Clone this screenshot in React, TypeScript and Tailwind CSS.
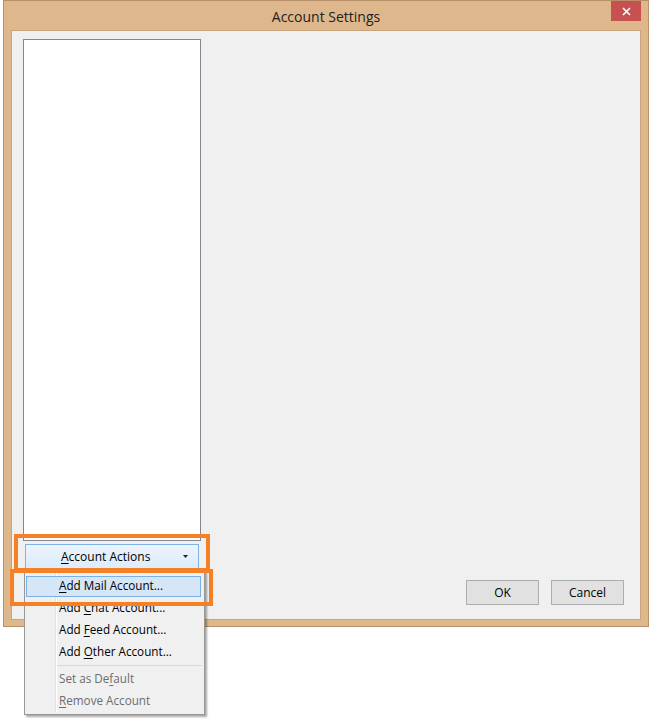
import React from "react";

const font = { fontFamily: '"Open Sans", "Noto Sans", sans-serif' };

function MenuItem({ label, u, rest, disabled }: { label: string; u: string; rest: string; disabled?: boolean }) {
  return (
    <div className={`h-[22px] flex items-center pl-[34px] text-[11.7px] ${disabled ? "text-[#6d6d6d]" : "text-black"}`}>
      <span className="whitespace-pre">
        {label}
        <span className="underline underline-offset-2">{u}</span>
        {rest}
      </span>
    </div>
  );
}

export default function App() {
  return (
    <div className="relative w-[655px] h-[724px] bg-white overflow-hidden" style={font}>
      {/* Window */}
      <div className="ml-[3px] w-[646px] h-[627px] bg-[#dfb78c] border border-[#b8916a] flex flex-col">
        {/* Title bar */}
        <div className="relative h-[29px] flex items-center justify-center">
          <span className="text-[14px] text-[#1e1e1e] mt-[2px]">Account Settings</span>
          <div className="absolute right-[7px] top-0 w-[30px] h-[20px] bg-[#c75050] flex items-center justify-center">
            <svg width="9" height="9" viewBox="0 0 9 9">
              <path d="M1 1 L8 8 M8 1 L1 8" stroke="white" strokeWidth="1.6" />
            </svg>
          </div>
        </div>
        {/* Client area */}
        <div className="mx-[7px] h-[590px] bg-[#f0f0f0] border border-[#c9a37a] flex">
          <div className="pl-[11px] pt-[8px] flex flex-col">
            <div className="w-[178px] h-[502px] bg-white border border-[#828790]" />
            <div className="mt-[3px] ml-[2px] w-[174px] h-[25px] border border-[#7eb4ea] bg-gradient-to-b from-[#ecf4fc] to-[#dcecfc] flex items-center text-[12px] text-black">
              <span className="ml-[35px]">
                <span className="underline underline-offset-2">A</span>ccount Actions
              </span>
              <svg className="ml-auto mr-[10px]" width="5" height="3" viewBox="0 0 5 3">
                <path d="M0 0 H5 L2.5 3 Z" fill="#222" />
              </svg>
            </div>
          </div>
          <div className="flex-1 flex items-end justify-end gap-[12px] pr-[16px] pb-[14px]">
            <div className="w-[73px] h-[25px] border border-[#adadad] bg-[#e1e1e1] flex items-center justify-center text-[12px] text-black">
              OK
            </div>
            <div className="w-[73px] h-[25px] border border-[#adadad] bg-[#e1e1e1] flex items-center justify-center text-[12px] text-black">
              Cancel
            </div>
          </div>
        </div>
      </div>

      {/* Dropdown menu */}
      <div className="absolute left-[24px] top-[569px] w-[181px] h-[146px] bg-[#f0f0f0] border border-[#979797] shadow-[2px_2px_2px_rgba(0,0,0,0.35)] pt-[2px]">
        <div className="absolute left-[30px] top-[2px] bottom-[2px] w-[1px] bg-[#e2e3e3]" />
        <div className="absolute left-[31px] top-[2px] bottom-[2px] w-[1px] bg-white" />
        <div className="relative">
          <div className="absolute left-[1px] top-[4px] w-[175px] h-[21px] bg-[#d5e6f7] border border-[#7ab0e6]" />
          <div className="relative pt-[3px]">
            <MenuItem label="" u="A" rest="dd Mail Account..." />
            <MenuItem label="Add " u="C" rest="hat Account..." />
            <MenuItem label="Add " u="F" rest="eed Account..." />
            <MenuItem label="Add " u="O" rest="ther Account..." />
            <div className="ml-[32px] mr-[2px] my-[2px] h-[1px] bg-[#d7d7d7]" />
            <MenuItem label="Set as De" u="f" rest="ault" disabled />
            <MenuItem label="" u="R" rest="emove Account" disabled />
          </div>
        </div>
      </div>

      {/* Orange highlight boxes */}
      <div className="absolute left-[14px] top-[534px] w-[196px] h-[38px] border-[4px] border-[#f58025]" />
      <div className="absolute left-[10px] top-[569px] w-[203px] h-[37px] border-[4px] border-[#f58025]" />
    </div>
  );
}
